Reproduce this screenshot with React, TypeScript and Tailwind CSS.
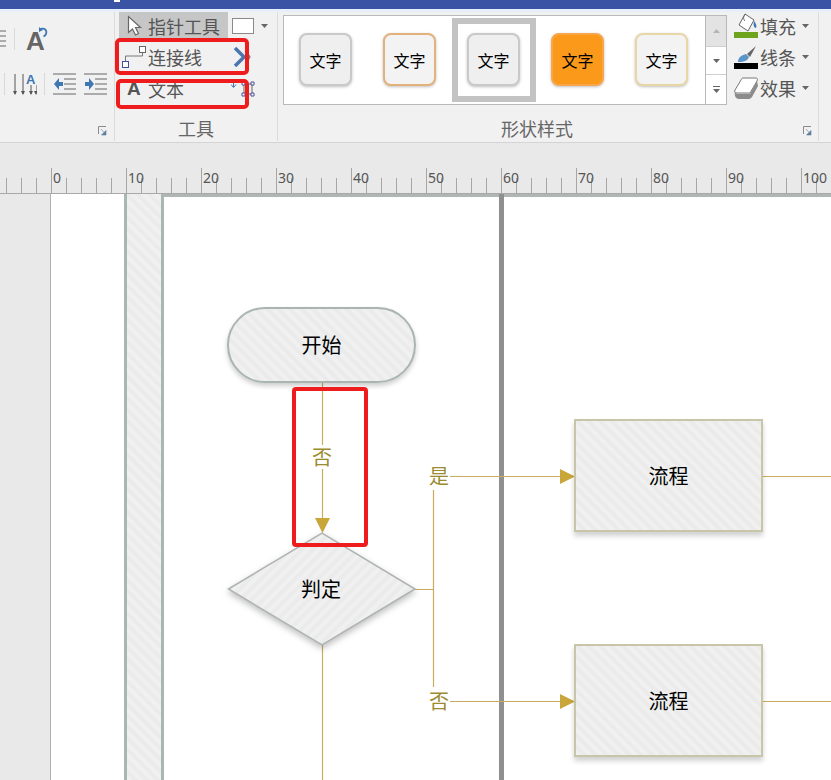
const fontStack = { fontFamily: '"Noto Sans CJK SC", "Noto Sans", sans-serif' };

const hatch =
  "bg-[repeating-linear-gradient(45deg,#f0f0f0_0px,#f0f0f0_4px,#ebebeb_4px,#ebebeb_8px)]";

const swatches = [
  { border: "border-[#c9c9c9]", bg: "bg-[#efefef]", selected: false },
  { border: "border-[#e3b27c]", bg: "bg-[#f3f3f3]", selected: false },
  { border: "border-[#c9c9c9]", bg: "bg-[#efefef]", selected: true },
  { border: "border-[#f9a64a]", bg: "bg-[#fb9a1a]", selected: false },
  { border: "border-[#e8d7a6]", bg: "bg-[#f3f3f3]", selected: false },
];

const rulerMarks = [-1, 0, 1, 2, 3, 4, 5, 6, 7, 8, 9, 10];

const Launcher = () => (
  <svg width="9" height="10" viewBox="0 0 9 10" className="absolute right-[7px] top-[9px]">
    <path d="M0.5 8V0.5H8" fill="none" stroke="#8a8a8a" />
    <path d="M3 3l4 4.5M8 4.5V9H3.5z" fill="#5f7f9f" stroke="#5f7f9f" strokeWidth="0.6" />
  </svg>
);

const Caret = () => (
  <svg width="7" height="4" viewBox="0 0 7 4" className="shrink-0">
    <path d="M0 0h7L3.5 4z" fill="#666" />
  </svg>
);

const IndentIcon = ({ flip }: { flip?: boolean }) => (
  <svg width="23" height="22" viewBox="0 0 23 22">
    <path d="M0 1h23M11 6h12M11 11h12M11 16h12M0 21h23" stroke="#666" strokeWidth="1" fill="none" />
    {flip ? (
      <path d="M1 9h4V5l5 6-5 6v-4H1z" fill="#3f76b4" />
    ) : (
      <path d="M10 9H6V5l-5 6 5 6v-4h4z" fill="#3f76b4" />
    )}
  </svg>
);

const FormatRow = ({ label, icon }: { label: string; icon: React.ReactNode }) => (
  <div className="flex h-[31px] items-center">
    <div className="flex h-[24px] w-[25px] items-center justify-center">{icon}</div>
    <span className="ml-[2px] w-[36px] text-[18px] leading-none text-[#555]">{label}</span>
    <span className="ml-[6px]">
      <Caret />
    </span>
  </div>
);

const Process = ({ top }: { top: string }) => (
  <div
    className={`absolute left-[574px] flex h-[113px] w-[189px] items-center justify-center border-2 border-[#c9c5a8] text-[20px] text-black shadow-[0_4px_5px_rgba(0,0,0,0.18)] ${hatch} ${top}`}
  >
    流程
  </div>
);

const EdgeLabel = ({ text, pos }: { text: string; pos: string }) => (
  <span className={`absolute bg-white text-[20px] leading-[24px] text-[#9c8a30] ${pos}`}>{text}</span>
);

export default function App() {
  return (
    <div className="relative flex h-[780px] w-[831px] flex-col overflow-hidden bg-[#e9e9e9]" style={fontStack}>
      {/* title bar sliver */}
      <div className="flex h-[9px] shrink-0 bg-[#3a53a5] pl-[114px]">
        <div className="h-[2px] w-[6px] bg-white" />
      </div>
      <div className="h-[3px] shrink-0 bg-[#e6eef8]" />

      {/* ribbon */}
      <div className="flex h-[131px] shrink-0 border-b border-[#d4d4d4] bg-[#f1f1f1]">
        {/* font / paragraph group, cut off at the left */}
        <div className="flex w-[115px] shrink-0 flex-col">
          <div className="h-[105px] border-r border-[#dcdcdc]">
            <div className="mt-[16px] flex h-[22px] items-center">
              <svg width="6" height="18" viewBox="0 0 6 18">
                <path d="M0 1h6M0 6h6M0 11h6M0 16h6" stroke="#666" />
              </svg>
              <div className="ml-[8px] h-[22px] w-px bg-[#d8d8d8]" />
              <span
                className="ml-[11px] mt-[4px] text-[26px] font-bold leading-none text-[#666]"
                style={{ fontFamily: '"Liberation Sans", sans-serif' }}
              >
                A
              </span>
              <svg width="9" height="12" viewBox="0 0 9 12" className="-ml-[6px] -mt-[12px]">
                <path d="M1 2.500c2-1.500 5-1 6 1s0 5-2.500 6" fill="none" stroke="#3f76b4" strokeWidth="1.800" />
                <path d="M0 0v5l4-2z" fill="#3f76b4" />
              </svg>
            </div>
            <div className="mt-[22px] flex h-[24px] items-center">
              <div className="ml-[4px] h-[22px] w-px bg-[#d8d8d8]" />
              <svg width="24" height="24" viewBox="0 0 24 24" className="ml-[8px]">
                <path d="M2 2v20M10 2v20M18 13v9M24 13v9" stroke="#555" fill="none" />
                <path d="M0 19l2 4 2-4zM8 19l2 4 2-4zM16 19l2 4 2-4zM21 19l2 4 2-4z" fill="#555" />
                <text x="13" y="12" fontSize="13" fontWeight="700" fill="#3f76b4" fontFamily="Liberation Sans">A</text>
              </svg>
              <div className="ml-[7px] h-[22px] w-px bg-[#d8d8d8]" />
              <div className="ml-[8px] flex gap-[8px]">
                <IndentIcon />
                <IndentIcon flip />
              </div>
            </div>
          </div>
          <div className="relative h-[24px] border-r border-[#dcdcdc]">
            <Launcher />
          </div>
        </div>

        {/* tools group */}
        <div className="flex w-[163px] shrink-0 flex-col">
          <div className="h-[105px] border-r border-[#dcdcdc] pl-[4px]">
            <div className="flex h-[26px] items-center">
              <div className="flex h-[26px] w-[109px] items-center bg-[#c6c6c6] pl-[8px]">
                <svg width="16" height="22" viewBox="0 0 16 22" className="mt-[2px]">
                  <path d="M1.500 1.500v16l4-3.500 3 6 3-1.500-3-6h5z" fill="#fff" stroke="#666" strokeWidth="1.200" />
                </svg>
                <span className="ml-[5px] pt-[2px] text-[18px] leading-none text-[#555]">指针工具</span>
              </div>
              <div className="ml-[4px] mt-[2px] h-[16px] w-[22px] border border-[#8a8a8a] bg-white" />
              <span className="ml-[7px] mt-[2px]">
                <Caret />
              </span>
            </div>
            <div className="mt-[3px] flex h-[31px] items-center">
              <svg width="24" height="22" viewBox="0 0 24 22" className="ml-[3px]">
                <rect x="0.500" y="15.500" width="6" height="6" fill="#fff" stroke="#44509a" />
                <rect x="17.500" y="0.500" width="6" height="6" fill="#fff" stroke="#666" />
                <path d="M3.500 15v-5h17V7" fill="none" stroke="#777" />
              </svg>
              <span className="ml-[2px] text-[18px] leading-none text-[#555]">连接线</span>
              <svg width="18" height="20" viewBox="0 0 18 20" className="ml-[31px]">
                <path d="M2 1l9 9-9 9" fill="none" stroke="#4a76b0" strokeWidth="3.500" />
                <path d="M14 5l3 5-3 5" fill="none" stroke="#777" strokeWidth="1.200" />
              </svg>
            </div>
            <div className="mt-[1px] flex h-[31px] items-center">
              <span className="ml-[8px] w-[15px] text-[19px] font-bold leading-none text-[#555]" style={{ fontFamily: '"Liberation Sans", sans-serif' }}>
                A
              </span>
              <span className="ml-[6px] text-[18px] leading-none text-[#555]">文本</span>
              <svg width="24" height="16" viewBox="0 0 24 16" className="ml-[47px]">
                <path d="M2.500 0v6M0 3.500l2.500 3 2.500-3" fill="none" stroke="#4a76b0" />
                <path d="M13 3h8v10h-8z" fill="none" stroke="#666" />
                <path d="M11 1h3v3h-3zM20 1h3v3h-3zM11 12h3v3h-3zM20 12h3v3h-3z" fill="#fff" stroke="#44509a" />
              </svg>
            </div>
          </div>
          <div className="relative flex h-[24px] items-center justify-center border-r border-[#dcdcdc] pb-[2px] text-[18px] leading-none text-[#666]">工具</div>
        </div>

        {/* shape styles group */}
        <div className="flex flex-1 flex-col">
          <div className="flex h-[105px] pl-[5px] pt-[3px]">
            <div className="flex h-[90px] w-[423px] items-center border border-[#b9b9b9] bg-white">
              {swatches.map((s, i) => (
                <div
                  key={i}
                  className={`flex h-[84px] w-[84px] shrink-0 items-center justify-center pb-[1px] pr-[1px] ${s.selected ? "border-[6px] border-[#c3c3c3]" : ""}`}
                >
                  <div
                    className={`flex h-[53px] w-[53px] items-center justify-center rounded-lg border-2 text-[16px] text-black shadow-[0_1px_3px_rgba(0,0,0,0.25)] ${s.border} ${s.bg}`}
                  >
                    文字
                  </div>
                </div>
              ))}
            </div>
            <div className="flex h-[90px] w-[21px] flex-col border-y border-r border-[#b9b9b9] bg-white">
              <div className="flex h-[31px] items-center justify-center border-b border-[#d0d0d0] bg-[#e3e3e3]">
                <svg width="7" height="4" viewBox="0 0 7 4">
                  <path d="M0 4h7L3.5 0z" fill="#b5b5b5" />
                </svg>
              </div>
              <div className="flex h-[28px] items-center justify-center border-b border-[#d0d0d0]">
                <Caret />
              </div>
              <div className="flex flex-1 flex-col items-center justify-center gap-[2px]">
                <div className="h-px w-[7px] bg-[#666]" />
                <Caret />
              </div>
            </div>
            <div className="-mt-[5px] ml-[6px] flex w-[85px] flex-col">
              <FormatRow
                label="填充"
                icon={
                  <svg width="24" height="26" viewBox="0 0 24 26">
                    <path d="M11 1l9 6-6 11-9-6z" fill="#fff" stroke="#666" />
                    <path d="M12 1C9 3 9 6 11 8" fill="none" stroke="#666" />
                    <path d="M20 8c2 2 3 5 2 7-2 0-3-3-2-7z" fill="#3f76b4" />
                    <rect x="0" y="19" width="24" height="6" fill="#6ea31e" />
                  </svg>
                }
              />
              <FormatRow
                label="线条"
                icon={
                  <svg width="24" height="24" viewBox="0 0 24 24">
                    <path d="M4 17c0-5 4-7 8-8l3 3c-1 3-4 5-11 5z" fill="#5b94c9" />
                    <path d="M13 9l9-8-6 11z" fill="#666" />
                    <rect x="0" y="18" width="24" height="6" fill="#000" />
                  </svg>
                }
              />
              <FormatRow
                label="效果"
                icon={
                  <svg width="24" height="22" viewBox="0 0 24 22">
                    <path d="M9 1h13c1 0 2 1 1 3l-7 12H3c-2 0-3-1-2-3l6-10c.5-1 1-2 2-2z" fill="#fff" stroke="#777" />
                    <path d="M1 14c0 2 1 3 3 3h12l7-13 1 5-6 11c-1 1-2 2-3 2H5c-3 0-5-3-4-8z" fill="#8b8b8b" />
                  </svg>
                }
              />
            </div>
            <div className="-mt-[3px] h-[129px] w-px bg-[#dcdcdc]" />
          </div>
          <div className="relative flex h-[24px] items-center pb-[2px]">
            <span className="ml-[223px] text-[18px] leading-none text-[#666]">形状样式</span>
            <span className="absolute left-[-2px] top-0 h-full w-[543px]">
              <Launcher />
            </span>
          </div>
        </div>
      </div>

      {/* ruler */}
      <div className="flex h-[51px] shrink-0 items-end overflow-hidden border-b border-[#a9a9a9]">
        <div className="ml-[-24px] flex">
          {rulerMarks.map((m) => (
            <div key={m} className="relative flex h-[25px] w-[75px] shrink-0 items-end">
              {[0, 1, 2, 3, 4].map((t) => (
                <div key={t} className={`w-[15px] border-l border-[#a6a6a6] ${t === 0 ? "h-[25px]" : "h-[15px]"}`} />
              ))}
              {m >= 0 && (
                <span className="absolute left-[2px] top-[1px] text-[14px] leading-[18px] text-[#555]" style={{ fontFamily: '"Noto Sans", sans-serif' }}>
                  {m * 10}
                </span>
              )}
            </div>
          ))}
        </div>
      </div>

      {/* drawing page: nodes sit on a free canvas at y offset 194 */}
      <div className="relative flex-1">
        <div className="absolute bottom-0 left-[50px] right-0 top-0 border-l border-[#b0b0b0] bg-white" />
        <div className={`absolute bottom-0 left-[124px] top-0 w-[40px] border-x-[3px] border-[#a9b7b4] ${hatch}`} />
        <div className="absolute left-[163px] right-0 top-0 h-[3px] bg-[#b0b6b4]" />
        <div className="absolute bottom-0 left-[499px] top-0 w-[5px] bg-[#8f8f8f]" />

        <svg width="831" height="586" viewBox="0 194 831 586" className="absolute left-0 top-0">
          <defs>
            <pattern id="diamondHatch" width="8" height="8" patternUnits="userSpaceOnUse" patternTransform="rotate(-45)">
              <rect width="8" height="8" fill="#f0f0f0" />
              <rect width="8" height="4" fill="#ebebeb" />
            </pattern>
          </defs>
          <g stroke="#c9ad5e" strokeWidth="1.200" fill="none">
            <path d="M322.500 382V520" />
            <path d="M322.500 645V780" />
            <path d="M415 589.500H433.500M433.500 490V687" />
            <path d="M450 476.500H560M450 701.500H560" />
            <path d="M762 476.500H831M762 701.500H831" />
          </g>
          <g fill="#c8a63a">
            <path d="M315 518h15l-7.500 15z" />
            <path d="M560 469v15l15-7.500z" />
            <path d="M560 694v15l15-7.500z" />
          </g>
          <path
            d="M228.500 589L322 533L415 589L322 645Z"
            fill="url(#diamondHatch)"
            stroke="#aeb4b2"
            strokeWidth="1.500"
            className="drop-shadow-[0_3px_3px_rgba(0,0,0,0.25)]"
          />
        </svg>

        <div className={`absolute left-[227px] top-[113px] flex h-[76px] w-[189px] items-center justify-center rounded-full border-2 border-[#aab5b1] text-[20px] text-black shadow-[0_3px_5px_rgba(0,0,0,0.2)] ${hatch}`}>
          开始
        </div>
        <span className="absolute left-[301px] top-[380px] text-[20px] leading-[30px] text-black">判定</span>

        <EdgeLabel text="否" pos="left-[312px] top-[251px]" />
        <EdgeLabel text="是" pos="left-[429px] top-[270px]" />
        <EdgeLabel text="否" pos="left-[429px] top-[495px]" />

        <Process top="top-[225px]" />
        <Process top="top-[450px]" />
      </div>

      {/* red callout frames drawn over the screenshot */}
      <div className="absolute left-[115px] top-[38px] h-[37px] w-[134px] rounded-[5px] border-4 border-[#ee1c1c]" />
      <div className="absolute left-[116px] top-[79px] h-[30px] w-[133px] rounded-[5px] border-4 border-[#ee1c1c]" />
      <div className="absolute left-[292px] top-[387px] h-[160px] w-[76px] rounded-[4px] border-4 border-[#ee1c1c]" />
    </div>
  );
}
